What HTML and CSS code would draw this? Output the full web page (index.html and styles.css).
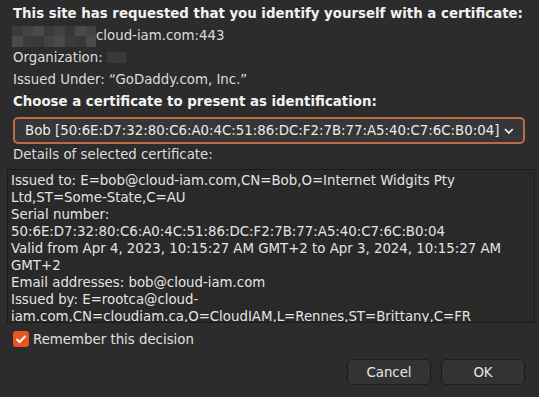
FILE: index.html
```html
<html>
<head>
	<title>Certificate</title>
	<link rel="stylesheet" href="styles.css">
</head>
<body>
<div class="dialog">
	<div class="line bold">This site has requested that you identify yourself with a certificate:</div>
	<div class="line host">
		<span class="mosaic">
			<i class="c1"></i><i class="c2"></i><i class="c3"></i><i class="c1"></i><i class="c2"></i><i class="c4"></i><i class="c3"></i><i class="c2"></i>
			<i class="c3"></i><i class="c1"></i><i class="c4"></i><i class="c2"></i><i class="c3"></i><i class="c1"></i><i class="c4"></i><i class="c3"></i>
		</span>cloud-iam.com:443
	</div>
	<div class="line">Organization: <span class="redact"></span></div>
	<div class="line">Issued Under: “GoDaddy.com, Inc.”</div>
	<div class="line bold">Choose a certificate to present as identification:</div>
	<div class="select">
		<span>Bob [50:6E:D7:32:80:C6:A0:4C:51:86:DC:F2:7B:77:A5:40:C7:6C:B0:04]</span>
		<svg width="12" height="8" viewBox="0 0 12 8"><path d="M2 2 L6 6 L10 2" fill="none" stroke="#e8e8e8" stroke-width="1.8"/></svg>
	</div>
	<div class="line">Details of selected certificate:</div>
	<div class="details">
		<div>Issued to: E=bob@cloud-iam.com,CN=Bob,O=Internet Widgits Pty</div>
		<div>Ltd,ST=Some-State,C=AU</div>
		<div>Serial number:</div>
		<div>50:6E:D7:32:80:C6:A0:4C:51:86:DC:F2:7B:77:A5:40:C7:6C:B0:04</div>
		<div>Valid from Apr 4, 2023, 10:15:27 AM GMT+2 to Apr 3, 2024, 10:15:27 AM</div>
		<div>GMT+2</div>
		<div>Email addresses: bob@cloud-iam.com</div>
		<div>Issued by: E=rootca@cloud-</div>
		<div>iam.com,CN=cloudiam.ca,O=CloudIAM,L=Rennes,ST=Brittany,C=FR</div>
	</div>
	<label class="remember">
		<span class="check"><svg width="12" height="10" viewBox="0 0 12 10"><path d="M1.5 5 L4.5 8 L10.5 2" fill="none" stroke="#fff" stroke-width="2"/></svg></span>
		Remember this decision
	</label>
	<div class="buttons">
		<button>Cancel</button>
		<button>OK</button>
	</div>
</div>
</body>
</html>
```
FILE: styles.css
```css
body {
	margin: 0;
	background-color: #2c2c2c;
	font-family: "DejaVu Sans", sans-serif;
	font-size: 13.33px;
	color: #dcdcdc;
}
.dialog {
	padding: 3px 14px 0 13px;
}
.line {
	height: 22px;
	line-height: 22px;
	white-space: nowrap;
}
.bold {
	font-weight: bold;
	color: #f2f2f2;
}
.host {
	display: flex;
	align-items: center;
}
.mosaic {
	display: grid;
	grid-template-columns: repeat(8, 10.5px);
	grid-template-rows: 10.5px 10.5px;
	margin-left: -1px;
}
.mosaic i { display: block; }
.c1 { background: #3b3b3b; }
.c2 { background: #434343; }
.c3 { background: #4a4a4a; }
.c4 { background: #383838; }
.redact {
	display: inline-block;
	width: 19px;
	height: 11px;
	background: #3a3a3a;
	vertical-align: -1px;
}

.select {
	display: flex;
	align-items: center;
	gap: 4px;
	height: 23px;
	margin: 4px 0 0 0;
	padding: 0 8px 0 10px;
	border: 2px solid #c0694a;
	border-radius: 5px;
	background-color: #363636;
	color: #ececec;
	white-space: nowrap;
}

.details {
	margin: 3px -10px 0 -6px;
	height: 150px;
	overflow: hidden;
	border: 1px solid #1b1b1b;
	background-color: #292929;
	padding: 2px 3px 0 3px;
	line-height: 17px;
	color: #e4e4e4;
	white-space: nowrap;
}

.remember {
	display: flex;
	align-items: center;
	gap: 4px;
	margin-top: 8px;
	height: 16px;
	color: #e0e0e0;
}
.check {
	display: flex;
	align-items: center;
	justify-content: center;
	width: 16px;
	height: 16px;
	border-radius: 3px;
	background-color: #e95420;
}

.buttons {
	display: flex;
	justify-content: flex-end;
	gap: 10px;
	margin: 12px 0 0 0;
}
.buttons button {
	width: 84px;
	height: 26px;
	font-family: "DejaVu Sans", sans-serif;
	font-size: 13.33px;
	color: #e6e6e6;
	background-color: #333333;
	border: 1px solid #1c1c1c;
	border-radius: 5px;
}
```
